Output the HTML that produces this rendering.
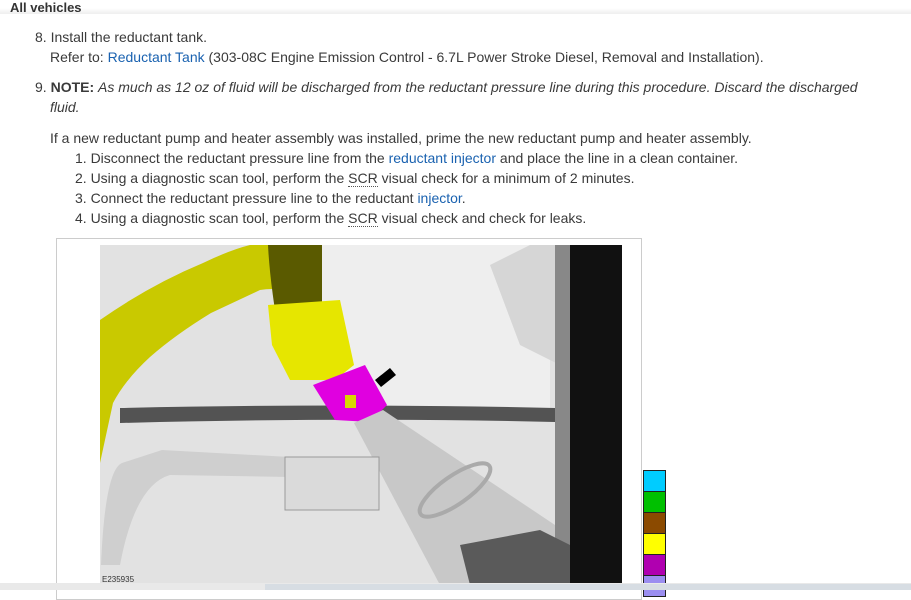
<!DOCTYPE html>
<html><head><style>
body{margin:0;width:911px;height:590px;overflow:hidden;background:#fff;font-family:"Liberation Sans",sans-serif;color:#3a3a3a;font-size:14px;position:relative}
.t{position:absolute;white-space:nowrap;line-height:16px}
a{color:#1a62b0;text-decoration:none}
.u{border-bottom:1px dotted #555}
.sw{position:absolute;left:643px;width:21px;height:20px;border:1px solid #222}
</style></head><body>
<div style="position:absolute;left:0;top:0;width:911px;height:14px;background:linear-gradient(#fff,#fff 8px,#eee)"></div>
<div class="t" style="left:10px;top:0px;font-weight:bold;color:#333;font-size:13px">All vehicles</div>
<div class="t" style="left:35px;top:29px">8. Install the reductant tank.</div>
<div class="t" style="left:50px;top:49px">Refer to: <a>Reductant Tank</a> (303-08C Engine Emission Control - 6.7L Power Stroke Diesel, Removal and Installation).</div>
<div class="t" style="left:35px;top:79px">9. <b>NOTE:</b> <i>As much as 12 oz of fluid will be discharged from the reductant pressure line during this procedure. Discard the discharged</i></div>
<div class="t" style="left:50px;top:99px"><i>fluid.</i></div>
<div class="t" style="left:50px;top:130px">If a new reductant pump and heater assembly was installed, prime the new reductant pump and heater assembly.</div>
<div class="t" style="left:75px;top:150px">1. Disconnect the reductant pressure line from the <a>reductant injector</a> and place the line in a clean container.</div>
<div class="t" style="left:75px;top:170px">2. Using a diagnostic scan tool, perform the <span class="u">SCR</span> visual check for a minimum of 2 minutes.</div>
<div class="t" style="left:75px;top:190px">3. Connect the reductant pressure line to the reductant <a>injector</a>.</div>
<div class="t" style="left:75px;top:210px">4. Using a diagnostic scan tool, perform the <span class="u">SCR</span> visual check and check for leaks.</div>
<div style="position:absolute;left:56px;top:238px;width:584px;height:360px;border:1px solid #ccc;background:#fff"></div>
<svg style="position:absolute;left:100px;top:245px" width="522" height="340" viewBox="0 0 522 340">
<rect width="522" height="340" fill="#e2e2e2"/>
<path d="M200 0 L450 0 L450 165 L230 165 Z" fill="#eeeeee"/>
<path d="M390 20 L430 0 L460 0 L460 120 L420 100 Z" fill="#d6d6d6"/>
<rect x="455" y="0" width="15" height="340" fill="#888"/>
<rect x="470" y="0" width="52" height="340" fill="#111"/>
<path d="M20 163 Q250 158 455 163 L455 177 Q250 172 20 178 Z" fill="#3a3a3a" opacity=".85"/>
<path d="M0 75 Q50 40 103 18 Q130 5 150 0 L222 0 L222 60 Q190 40 160 45 L111 68 Q75 90 50 112 Q25 135 13 158 L0 218 Z" fill="#c9c900"/>
<path d="M168 0 L222 0 L222 95 L180 95 Q170 40 168 0 Z" fill="#5a5a00"/>
<path d="M168 60 L240 55 L254 120 L235 135 L190 135 L172 100 Z" fill="#e6e600"/>
<path d="M213 140 L265 120 L287 160 L270 177 L235 175 Z" fill="#e000e0"/>
<rect x="245" y="150" width="11" height="13" fill="#d8d800"/>
<path d="M254 178 L283 165 L455 280 L455 340 L340 340 Z" fill="#c8c8c8"/>
<ellipse cx="355" cy="245" rx="42" ry="14" transform="rotate(-35 355 245)" fill="none" stroke="#aaa" stroke-width="4"/>
<path d="M360 300 L440 285 L470 300 L470 340 L370 340Z" fill="#5a5a5a"/>
<path d="M1 320 Q5 225 22 218 L62 205 L190 212 L190 232 L70 230 Q35 240 20 320 Z" fill="#cfcfcf"/>
<rect x="185" y="212" width="94" height="53" fill="#dadada" stroke="#999"/>
<path d="M275 135 L290 123 L296 130 L281 142Z" fill="#000"/>
<text x="2" y="337" font-size="8" fill="#333" font-family="Liberation Sans">E235935</text>
</svg>
<div class="sw" style="top:470px;background:#00ccff"></div>
<div class="sw" style="top:491px;background:#00c000"></div>
<div class="sw" style="top:512px;background:#8b4a00"></div>
<div class="sw" style="top:533px;background:#ffff00"></div>
<div class="sw" style="top:554px;background:#b000b0"></div>
<div class="sw" style="top:575px;background:#9b8ef0"></div>
<div style="position:absolute;left:0;top:583px;width:911px;height:7px;background:#e9e9e9"></div>
<div style="position:absolute;left:265px;top:584px;width:646px;height:6px;background:#d7dde3"></div>
</body></html>
